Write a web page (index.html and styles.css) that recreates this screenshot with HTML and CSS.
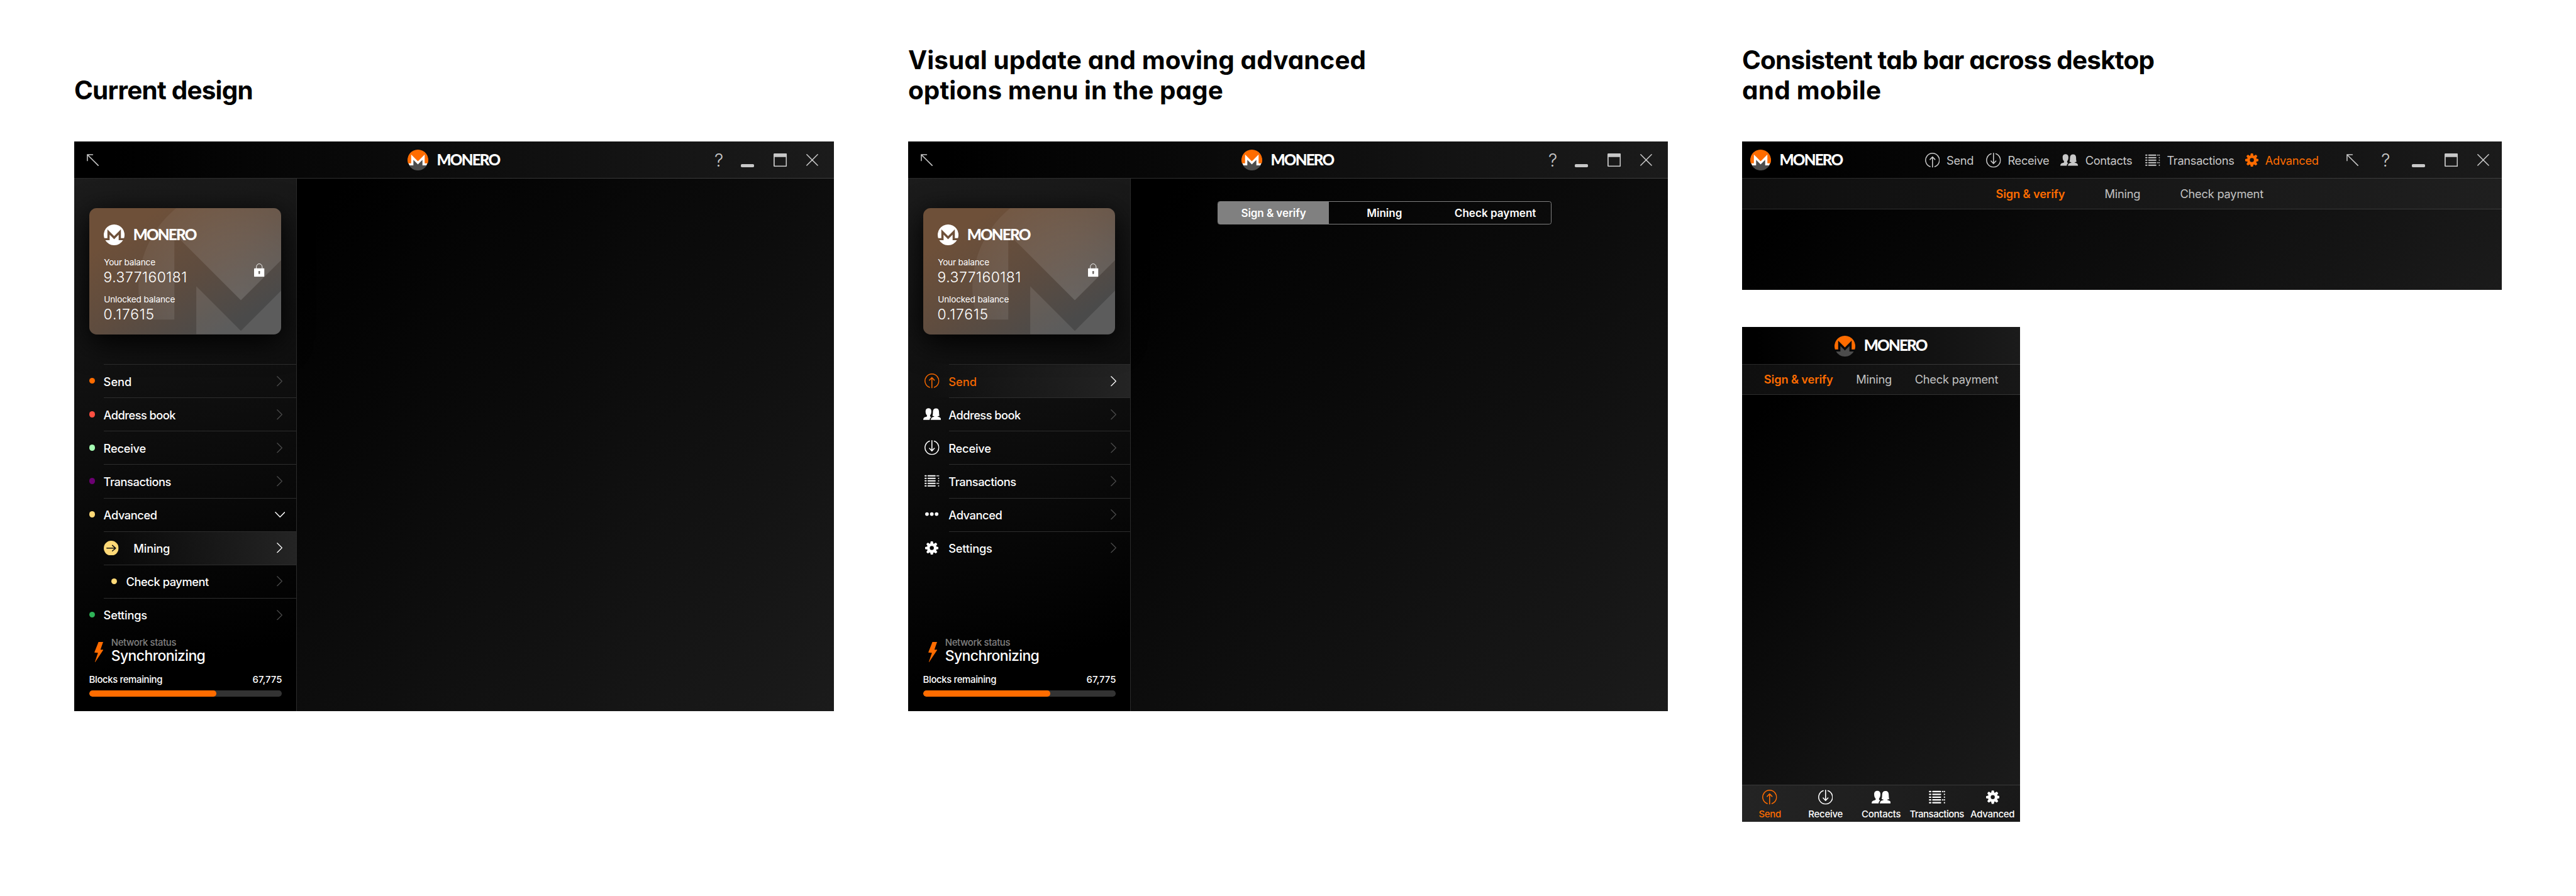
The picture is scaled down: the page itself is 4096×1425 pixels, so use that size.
FILE: index.html
```html
<!DOCTYPE html>
<html lang="en">
<head>
<meta charset="utf-8">
<title>Monero wallet navigation</title>
<link rel="stylesheet" href="styles.css">
</head>
<body>
<svg class="sprite" aria-hidden="true">
  <defs>
    <symbol id="logo-top" viewBox="0 0 226.8 226.8"><path d="M5.7 149 A113.4 113.4 0 1 1 221.1 149 H187.1 V53.9 L113.4 127.6 L39.7 53.9 V149 Z"/></symbol>
    <symbol id="logo-base" viewBox="0 0 226.8 226.8"><path d="M16.4 172.1 H64 V112 L113.4 161.4 L162.8 112 V172.1 H210.4 A113.4 113.4 0 0 1 16.4 172.1 Z"/></symbol>
    <symbol id="i-send" viewBox="0 0 20 20"><g fill="none" stroke="currentColor" stroke-width="1.3" stroke-linecap="round" stroke-linejoin="round"><path d="M6.8 18.7 A9.3 9.3 0 1 1 13.2 18.7"/><path d="M10 19.4 V5.6 M6.7 9 L10 5.5 L13.3 9"/></g></symbol>
    <symbol id="i-receive" viewBox="0 0 20 20"><g fill="none" stroke="currentColor" stroke-width="1.3" stroke-linecap="round" stroke-linejoin="round"><path d="M6.8 1.3 A9.3 9.3 0 1 0 13.2 1.3"/><path d="M10 .6 V14.4 M6.7 11 L10 14.5 L13.3 11"/></g></symbol>
    <symbol id="i-people" viewBox="0 0 26 17"><g fill="currentColor"><path d="M0 17C.2 14.4.9 13.7 3 13C4.7 12.4 5.6 12.1 5.6 11.2C5.6 10.2 3.9 8.8 3.7 7.3C3 3.6 3.4 0 7.7 0C12 0 12.2 3.8 11.6 7.3C11.2 9 9.9 10 9.9 11.2C10 12 11 12.8 11.7 13.2C10 14 9.6 15.4 9.4 17Z"/><path d="M11 17C11.3 14.2 12.8 13.4 15 12.8C15.6 12.6 16 12.2 16.2 11.8C15 11.6 14 11.3 13.4 10.8C14.3 9 14 7 14.2 4.6C14.5 1.7 16 .3 18.6 .3C21.5 .3 22.8 2 23 4.6C23.2 7 23 9 23.7 10.8C23 11.4 22 11.6 20.8 11.8C21 12.3 21.5 12.7 22.2 12.8C24.6 13.4 25.7 14.2 26 17Z"/></g></symbol>
    <symbol id="i-list" viewBox="0 0 22 17"><g fill="none" stroke="currentColor" stroke-width="1.9" stroke-linecap="round"><path d="M1 1H2.4M5.4 1H15.7M18.75 1h.01M21 1h.01M1 4.75H2.4M5.4 4.75H15.7M21 4.75h.01M1 8.5H2.4M5.4 8.5H15.7M21 8.5h.01M1 12.25H2.4M5.4 12.25H15.7M18.75 12.25h.01M21 12.25h.01M1 16H2.4M5.4 16H15.7M21 16h.01"/></g></symbol>
    <symbol id="i-gear" viewBox="0 0 18 18"><circle cx="9" cy="9" r="4.55" fill="none" stroke="currentColor" stroke-width="3.6"/><g fill="currentColor"><path id="tooth" d="M7.6 0H10.4L11.3 3.6H6.7Z"/><use href="#tooth" transform="rotate(45 9 9)"/><use href="#tooth" transform="rotate(90 9 9)"/><use href="#tooth" transform="rotate(135 9 9)"/><use href="#tooth" transform="rotate(180 9 9)"/><use href="#tooth" transform="rotate(225 9 9)"/><use href="#tooth" transform="rotate(270 9 9)"/><use href="#tooth" transform="rotate(315 9 9)"/></g></symbol>
    <symbol id="i-more" viewBox="0 0 18 5"><g fill="currentColor"><circle cx="2.5" cy="2.5" r="2.45"/><circle cx="9" cy="2.5" r="2.45"/><circle cx="15.5" cy="2.5" r="2.45"/></g></symbol>
    <symbol id="i-chevron" viewBox="0 0 8 14"><path d="M.7 .7 L7.1 7 L.7 13.3" fill="none" stroke="currentColor" stroke-width="1.1" stroke-linecap="round"/></symbol>
    <symbol id="i-chevron-down" viewBox="0 0 14 8"><path d="M.8 .7 L7 7 L13.2 .7" fill="none" stroke="currentColor" stroke-width="1.2" stroke-linecap="round"/></symbol>
    <symbol id="i-arrow" viewBox="0 0 16 16"><path d="M.8 9 V.8 H8 M.8 .8 L15.4 15.4" fill="none" stroke="currentColor" stroke-width="1.3" stroke-linecap="round"/></symbol>
    <symbol id="i-max" viewBox="0 0 18 18"><path d="M1.2 0H16.8Q18 0 18 1.2V16.8Q18 18 16.8 18H1.2Q0 18 0 16.8V1.2Q0 0 1.2 0ZM1.5 4.8V16.5H16.5V4.8Z" fill="currentColor" fill-rule="evenodd"/></symbol>
    <symbol id="i-close" viewBox="0 0 16 16"><path d="M.7 .7 L15.3 15.3 M15.3 .7 L.7 15.3" fill="none" stroke="currentColor" stroke-width="1.3" stroke-linecap="round"/></symbol>
    <symbol id="i-lock" viewBox="0 0 14 18"><path d="M3.1 7 V4.7 A3.9 4.2 0 0 1 10.9 4.7 V7" fill="none" stroke="#fff" stroke-width=".8"/><path d="M.8 6.5H13.2Q14 6.5 14 7.3V17.2Q14 18 13.2 18H.8Q0 18 0 17.2V7.3Q0 6.5 .8 6.5Z" fill="#fff"/><path d="M7 10.2a1.2 1.2 0 0 1 .9 2V14.2H6.1V12.2A1.2 1.2 0 0 1 7 10.2Z" fill="#5f5a55"/></symbol>
    <symbol id="i-bolt" viewBox="0 0 12.4 27.2"><path d="M5.6 0H11.9L8.3 10.3H12.3L1.1 27.2H.7L4.9 14.6L0 14.2Z" fill="#ff6c00"/></symbol>
    <symbol id="i-go" viewBox="0 0 20 20"><circle cx="10" cy="10" r="10" fill="#ffd977"/><path d="M4.1 10H15.6M11.6 6.2L16 10L11.6 13.8" fill="none" stroke="#111" stroke-width="1.3" stroke-linecap="round" stroke-linejoin="round"/></symbol>
    <radialGradient id="wm-fill" gradientUnits="userSpaceOnUse" cx="113" cy="125" r="125"><stop offset="0" stop-color="#fff" stop-opacity=".14"/><stop offset=".55" stop-color="#fff" stop-opacity=".1"/><stop offset="1" stop-color="#fff" stop-opacity=".05"/></radialGradient>
    <symbol id="watermark" viewBox="0 0 259 170">
      <g transform="translate(66.3 -31) scale(1.217)">
        <path fill="url(#wm-fill)" d="M5.7 149 A113.4 113.4 0 1 1 221.1 149 H187.1 V53.9 L113.4 127.6 L39.7 53.9 V149 Z"/>
        <path fill="#fff" fill-opacity=".1" d="M16.4 172.1 H64 V112 L113.4 161.4 L162.8 112 V172.1 H210.4 A113.4 113.4 0 0 1 16.4 172.1 Z"/>
      </g>
    </symbol>
  </defs>
</svg>

<main class="board">
  <section class="column">
    <h2 class="heading"><span class="snug">Current design</span></h2>
    <div class="window">
      <header class="titlebar titlebar--centered">
        <svg class="arrow"><use href="#i-arrow"/></svg>
        <div class="brand"><svg class="brand__logo"><circle cx="50%" cy="50%" r="48%" fill="#fff"/><use href="#logo-top" fill="#ff6c00"/><use href="#logo-base" fill="#4c4c4c"/></svg><span class="brand__name">MONERO</span></div>
        <div class="controls"><span class="help">?</span><i class="min"></i><svg class="max"><use href="#i-max"/></svg><svg class="close"><use href="#i-close"/></svg></div>
      </header>
      <div class="window__body">
        <aside class="sidebar">
          <div class="card">
            <svg class="card__mark"><use href="#watermark"/></svg>
            <div class="brand brand--card"><svg class="brand__logo" fill="#fff"><use href="#logo-top"/><use href="#logo-base"/></svg><span class="brand__name">MONERO</span></div>
            <div class="card__label">Your balance</div>
            <div class="card__value">9.377160181</div>
            <div class="card__label card__label--next">Unlocked balance</div>
            <div class="card__value card__value--wide">0.17615</div>
            <svg class="card__lock"><use href="#i-lock"/></svg>
          </div>
          <nav class="menu">
            <div class="row"><i class="dot" style="background:#ff6c00"></i><div class="row__main"><span class="t0">Send</span><svg class="chev"><use href="#i-chevron"/></svg></div></div>
            <div class="row"><i class="dot" style="background:#ff4f41"></i><div class="row__main"><span class="t3">Address book</span><svg class="chev"><use href="#i-chevron"/></svg></div></div>
            <div class="row"><i class="dot" style="background:#a6ffb4"></i><div class="row__main"><span class="t1">Receive</span><svg class="chev"><use href="#i-chevron"/></svg></div></div>
            <div class="row"><i class="dot" style="background:#6b0072"></i><div class="row__main"><span class="t2">Transactions</span><svg class="chev"><use href="#i-chevron"/></svg></div></div>
            <div class="row"><i class="dot" style="background:#ffd977"></i><div class="row__main"><span class="t2">Advanced</span><svg class="chev-down"><use href="#i-chevron-down"/></svg></div></div>
            <div class="row row--active"><div class="row__main"><svg class="go"><use href="#i-go"/></svg><span class="t1">Mining</span><svg class="chev"><use href="#i-chevron"/></svg></div></div>
            <div class="row"><div class="row__main row__main--sub"><i class="dot dot--sub" style="background:#ffd977"></i><span class="t2">Check payment</span><svg class="chev"><use href="#i-chevron"/></svg></div></div>
            <div class="row"><i class="dot" style="background:#2eb358"></i><div class="row__main"><span class="t1">Settings</span><svg class="chev"><use href="#i-chevron"/></svg></div></div>
          </nav>
          <footer class="status">
            <div class="status__net"><svg class="bolt"><use href="#i-bolt"/></svg><div><div class="status__label">Network status</div><div class="status__value">Synchronizing</div></div></div>
            <div class="status__blocks"><span>Blocks remaining</span><span class="t0">67,775</span></div>
            <div class="progress"><div class="progress__fill" style="width:65.8%"></div></div>
          </footer>
        </aside>
        <div class="page"></div>
      </div>
    </div>
  </section>

  <section class="column">
    <h2 class="heading"><span>Visual update and moving advanced</span><span>options menu in the page</span></h2>
    <div class="window">
      <header class="titlebar titlebar--centered">
        <svg class="arrow"><use href="#i-arrow"/></svg>
        <div class="brand"><svg class="brand__logo"><circle cx="50%" cy="50%" r="48%" fill="#fff"/><use href="#logo-top" fill="#ff6c00"/><use href="#logo-base" fill="#4c4c4c"/></svg><span class="brand__name">MONERO</span></div>
        <div class="controls"><span class="help">?</span><i class="min"></i><svg class="max"><use href="#i-max"/></svg><svg class="close"><use href="#i-close"/></svg></div>
      </header>
      <div class="window__body">
        <aside class="sidebar">
          <div class="card">
            <svg class="card__mark"><use href="#watermark"/></svg>
            <div class="brand brand--card"><svg class="brand__logo" fill="#fff"><use href="#logo-top"/><use href="#logo-base"/></svg><span class="brand__name">MONERO</span></div>
            <div class="card__label">Your balance</div>
            <div class="card__value">9.377160181</div>
            <div class="card__label card__label--next">Unlocked balance</div>
            <div class="card__value card__value--wide">0.17615</div>
            <svg class="card__lock"><use href="#i-lock"/></svg>
          </div>
          <nav class="menu menu--icons">
            <div class="row row--active row--orange"><svg class="icon"><use href="#i-send"/></svg><div class="row__main"><span class="t0">Send</span><svg class="chev"><use href="#i-chevron"/></svg></div></div>
            <div class="row"><svg class="icon icon--people"><use href="#i-people"/></svg><div class="row__main"><span class="t3">Address book</span><svg class="chev"><use href="#i-chevron"/></svg></div></div>
            <div class="row"><svg class="icon"><use href="#i-receive"/></svg><div class="row__main"><span class="t1">Receive</span><svg class="chev"><use href="#i-chevron"/></svg></div></div>
            <div class="row"><svg class="icon"><use href="#i-list"/></svg><div class="row__main"><span class="t2">Transactions</span><svg class="chev"><use href="#i-chevron"/></svg></div></div>
            <div class="row"><svg class="icon icon--gear"><use href="#i-more"/></svg><div class="row__main"><span class="t2">Advanced</span><svg class="chev"><use href="#i-chevron"/></svg></div></div>
            <div class="row"><svg class="icon icon--gear"><use href="#i-gear"/></svg><div class="row__main"><span class="t1">Settings</span><svg class="chev"><use href="#i-chevron"/></svg></div></div>
          </nav>
          <footer class="status">
            <div class="status__net"><svg class="bolt"><use href="#i-bolt"/></svg><div><div class="status__label">Network status</div><div class="status__value">Synchronizing</div></div></div>
            <div class="status__blocks"><span>Blocks remaining</span><span class="t0">67,775</span></div>
            <div class="progress"><div class="progress__fill" style="width:65.8%"></div></div>
          </footer>
        </aside>
        <div class="page">
          <div class="segments"><span class="segment segment--on">Sign &amp; verify</span><span class="segment">Mining</span><span class="segment">Check payment</span></div>
        </div>
      </div>
    </div>
  </section>

  <section class="column">
    <h2 class="heading"><span class="snug">Consistent tab bar across desktop</span><span class="loose">and mobile</span></h2>
    <div class="window window--short">
      <header class="titlebar titlebar--nav">
        <div class="brand"><svg class="brand__logo"><circle cx="50%" cy="50%" r="48%" fill="#fff"/><use href="#logo-top" fill="#ff6c00"/><use href="#logo-base" fill="#4c4c4c"/></svg><span class="brand__name">MONERO</span></div>
        <nav class="topnav">
          <span class="topnav__item t0"><svg class="icon"><use href="#i-send"/></svg>Send</span>
          <span class="topnav__item"><svg class="icon"><use href="#i-receive"/></svg>Receive</span>
          <span class="topnav__item"><svg class="icon icon--people"><use href="#i-people"/></svg>Contacts</span>
          <span class="topnav__item"><svg class="icon"><use href="#i-list"/></svg>Transactions</span>
          <span class="topnav__item topnav__item--on"><svg class="icon icon--gear"><use href="#i-gear"/></svg>Advanced</span>
        </nav>
        <div class="controls controls--nav"><svg class="arrow"><use href="#i-arrow"/></svg><span class="help">?</span><i class="min"></i><svg class="max"><use href="#i-max"/></svg><svg class="close"><use href="#i-close"/></svg></div>
      </header>
      <div class="subtabs"><span class="subtab subtab--on">Sign &amp; verify</span><span class="subtab">Mining</span><span class="subtab">Check payment</span></div>
      <div class="page"></div>
    </div>
    <div class="phone">
      <header class="titlebar titlebar--phone">
        <div class="brand"><svg class="brand__logo"><use href="#logo-top" fill="#ff6c00"/><use href="#logo-base" fill="#4c4c4c"/></svg><span class="brand__name">MONERO</span></div>
      </header>
      <div class="subtabs subtabs--phone"><span class="subtab subtab--on">Sign &amp; verify</span><span class="subtab">Mining</span><span class="subtab">Check payment</span></div>
      <div class="page"></div>
      <nav class="tabbar">
        <span class="tabbar__item tabbar__item--on"><svg class="icon"><use href="#i-send"/></svg>Send</span>
        <span class="tabbar__item"><svg class="icon"><use href="#i-receive"/></svg>Receive</span>
        <span class="tabbar__item"><svg class="icon icon--people"><use href="#i-people"/></svg>Contacts</span>
        <span class="tabbar__item tabbar__item--tight"><svg class="icon icon--list"><use href="#i-list"/></svg>Transactions</span>
        <span class="tabbar__item"><svg class="icon icon--gear"><use href="#i-gear"/></svg>Advanced</span>
      </nav>
    </div>
  </section>
</main>
</body>
</html>
```
FILE: styles.css
```css
/* 1rem = 10 units of a 3472-unit wide board */
html { font-size: calc(100vw / 347.2); }
* { box-sizing: border-box; }
body { margin: 0; background: #fff; color: #fff; font-family: Inter, "Liberation Sans", sans-serif; overflow: hidden; }
svg { display: block; flex: none; }
.sprite { position: absolute; width: 0; height: 0; }

.board { display: grid; grid-template-columns: repeat(3, 102.4rem); column-gap: 10rem; padding-left: 10rem; }
.column { display: flex; flex-direction: column; }
.heading { margin: 0; height: 19.1rem; padding: 0 0 4.83rem; display: flex; flex-direction: column; justify-content: flex-end; color: #000; font: 700 3.43rem/4.1rem Inter, sans-serif; font-feature-settings: "cv11"; letter-spacing: .0015em; white-space: nowrap; }
.heading .snug { letter-spacing: -.0195em; }
.heading .loose { letter-spacing: .006em; }

.window { height: 76.8rem; display: flex; flex-direction: column; background: #000; overflow: hidden; }
.window--short { height: 20rem; }
.window__body { flex: 1; display: flex; min-height: 0; }
.page { flex: 1; background: linear-gradient(135deg, #000 5%, #1b1b1b); }

.titlebar { height: 5rem; flex: none; padding-top: .1rem; align-items: center; border-bottom: .1rem solid rgba(255, 255, 255, .16); background: linear-gradient(90deg, #000 5%, #1b1b1b) border-box; color: #c8c8c8; }
.titlebar--centered { display: grid; grid-template-columns: 1fr auto 1fr; padding-left: 2.1rem; padding-right: 2.1rem; }
.titlebar--centered > .arrow { margin-left: -.4rem; }
.titlebar--nav { display: flex; padding-left: 1.1rem; padding-right: 1.7rem; }
.titlebar--phone { height: 5.1rem; display: flex; justify-content: center; }
.brand { display: flex; align-items: center; gap: 1.14rem; color: #fff; }
.brand__logo { width: 2.8rem; height: 2.8rem; }
.brand__name { width: 8.6rem; margin-bottom: .2rem; font: 900 2.06rem/2.4rem Lato, sans-serif; letter-spacing: -.074em; }
.brand--card { height: 2.8rem; }
.controls { display: flex; align-items: center; justify-content: flex-end; }
.arrow { width: 1.6rem; height: 1.6rem; }
.help { width: 1.05rem; font-size: 2.4rem; line-height: 2.4rem; font-weight: 300; margin-left: -.1rem; }
.min { width: 1.8rem; height: .4rem; margin: 1.4rem 2.65rem 0 2.5rem; border-radius: .15rem; background: #c8c8c8; }
.max { width: 1.8rem; height: 1.8rem; margin-right: 2.6rem; }
.close { width: 1.6rem; height: 1.6rem; }
.controls--nav { margin-left: auto; }
.controls--nav .help { margin-left: 3.1rem; }
.controls--nav .min { margin-left: 3.05rem; }

.sidebar { width: 30rem; flex: none; display: flex; flex-direction: column; padding-top: 4rem; border-right: .1rem solid #2b2b2b; background: linear-gradient(168deg, #1c1c1c, #000 88%); }
.card { position: relative; width: 25.9rem; height: 17rem; margin-left: 2rem; padding: 2.2rem 2rem 0; border-radius: 1rem; background: linear-gradient(148deg, #6e5039 18%, #5e4c3f 52%, #4a4a4a 84%); box-shadow: 0 1rem 4rem #000; }
.card__mark { position: absolute; inset: 0; width: 100%; height: 100%; border-radius: inherit; overflow: hidden; }
.card > .brand, .card > div { position: relative; }
.card__label { margin-top: 1.58rem; font-size: 1.16rem; line-height: 1.4rem; letter-spacing: -.017em; }
.card__label--next { margin-top: 1.08rem; letter-spacing: -.0135em; }
.card__value { margin-top: .11rem; margin-left: -.05rem; font-size: 1.94rem; line-height: 2.4rem; font-weight: 350; letter-spacing: .021em; }
.card__value--wide { letter-spacing: .035em; }
.card__lock { position: absolute; left: 22.25rem; top: 7.45rem; width: 1.4rem; height: 1.8rem; }

.menu { margin-top: 4rem; }
.row { height: 4.5rem; display: grid; grid-template-columns: 2rem 2rem 1fr; align-items: center; font-size: 1.55rem; font-weight: 500; }
.row .dot { grid-column: 2; }
.row__main { grid-column: 3; height: 100%; display: flex; align-items: center; border-top: .1rem solid #2d2d2d; }
.row__main span { padding-top: .06rem; margin-left: -.05rem; }
.row__main--sub { padding-left: 1rem; }
.row--active { background: linear-gradient(90deg, transparent 10%, #242424); }
.row--orange { color: #f26600; }
.menu--icons .row { grid-template-columns: 2rem 3.5rem 1fr; }
.menu--icons .icon { grid-column: 2; justify-self: center; margin-right: 1.1rem; }
.dot { width: .8rem; height: .8rem; border-radius: 50%; }
.dot--sub { margin-right: 1.25rem; }
.go { width: 2rem; height: 2rem; margin-right: 2.05rem; }
.chev { width: .8rem; height: 1.4rem; margin-left: auto; margin-right: 1.85rem; color: #4b4b4b; }
.row--active .chev { color: #fff; }
.chev-down { width: 1.4rem; height: .8rem; margin-left: auto; margin-right: 1.5rem; }
.t0 { letter-spacing: 0; }
.t1 { letter-spacing: -.013em; }
.t2 { letter-spacing: -.024em; }
.t3 { letter-spacing: -.03em; }

.icon { width: 2rem; height: 2rem; }
.icon--people { width: 2.4rem; height: 1.6rem; }
.icon--list { width: 2.2rem; }
.icon--gear { width: 1.8rem; height: 1.8rem; }

.status { margin-top: auto; padding: 0 1.9rem 2rem 2rem; font-size: 1.27rem; line-height: 1.57rem; font-weight: 500; }
.status__net { display: flex; padding-left: .7rem; gap: 1.05rem; }
.bolt { width: 1.24rem; height: 2.72rem; margin-top: .67rem; }
.status__label { color: #7f7f7f; letter-spacing: -.027em; }
.status__value { font-size: 1.95rem; line-height: 2.2rem; letter-spacing: -.028em; }
.status__blocks { display: flex; justify-content: space-between; margin-top: 1.24rem; letter-spacing: -.0256em; }
.progress { height: .8rem; margin-top: .68rem; border-radius: .4rem; background: #333; overflow: hidden; }
.progress__fill { height: 100%; border-radius: inherit; background: #ff6c00; }

.segments { display: grid; grid-template-columns: repeat(3, 1fr); width: 45rem; height: 3.2rem; margin: 3rem 0 0 11.7rem; border: .1rem solid #808080; border-radius: .3rem; overflow: hidden; font-size: 1.45rem; font-weight: 600; }
.segment { display: flex; align-items: center; justify-content: center; }
.segment--on { background: #808080; letter-spacing: -.006em; }

.topnav { display: grid; grid-template-columns: 8.25rem 10.05rem 11.4rem 13.45rem 10rem; margin-left: 11rem; font-size: 1.55rem; }
.topnav__item { display: flex; align-items: center; gap: .92rem; height: 2rem; letter-spacing: -.017em; }
.topnav__item--on { color: #ff6c00; }
.subtabs { height: 4.1rem; flex: none; display: flex; align-items: center; gap: 5.35rem; padding-left: 34.2rem; border-bottom: .1rem solid rgba(255, 255, 255, .13); background: linear-gradient(100deg, #0f0f0f, #1f1f1f) border-box; color: #c2c2c2; font-size: 1.55rem; letter-spacing: -.012em; }
.subtab--on { color: #ff6c00; font-weight: 600; letter-spacing: -.008em; }

.phone { width: 37.5rem; height: 66.7rem; margin-top: 5rem; display: flex; flex-direction: column; background: #000; }
.subtabs--phone { height: 4rem; gap: 3.1rem; padding-left: 2.95rem; background: linear-gradient(100deg, #0f0f0f, #171717) border-box; }
.tabbar { height: 5rem; flex: none; display: grid; grid-template-columns: repeat(5, 1fr); border-top: .1rem solid #3a3a3a; background: linear-gradient(100deg, #242424, #191919); font-size: 1.27rem; line-height: 1.4rem; font-weight: 500; }
.tabbar__item { display: flex; flex-direction: column; align-items: center; padding-top: .6rem; gap: .6rem; letter-spacing: -.018em; white-space: nowrap; }
.tabbar__item--on { color: #ff6c00; }
.tabbar__item--tight { letter-spacing: -.033em; }
.tabbar .icon { height: 2rem; }
.tabbar .icon--people { width: 2.6rem; }
.tabbar .icon--gear { width: 1.8rem; }
```
